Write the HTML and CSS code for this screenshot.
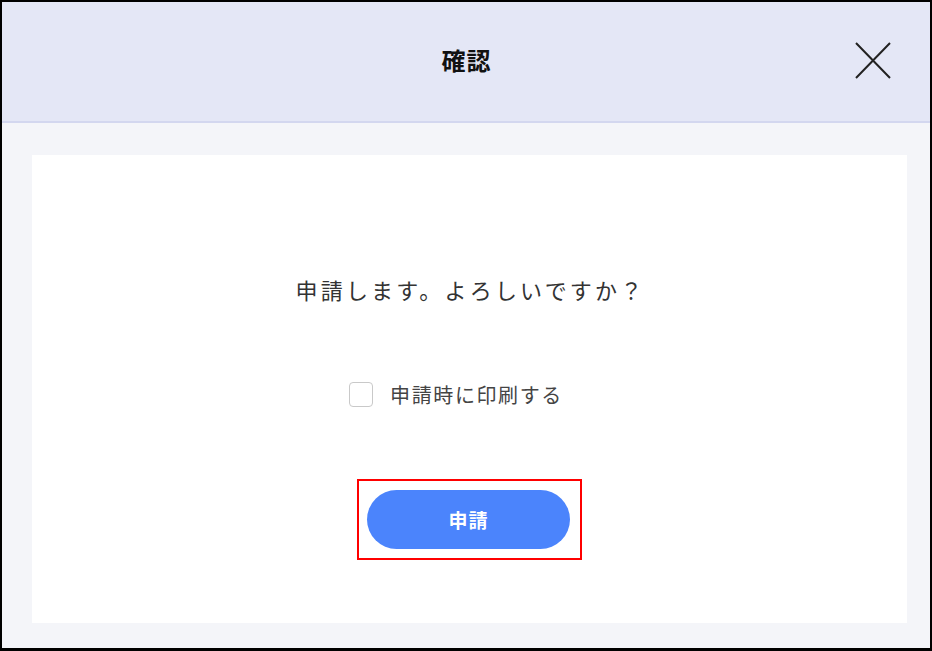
FILE: index.html
```html
<!DOCTYPE html>
<html lang="ja">
<head>
<meta charset="utf-8">
<title>確認</title>
<link rel="stylesheet" href="styles.css">
</head>
<body>
<div class="frame">
  <header class="dialog-header">
    <span class="spacer"></span>
    <h1 class="title">確認</h1>
    <button class="close" aria-label="閉じる">
      <svg width="36" height="37" viewBox="0 0 36 37">
        <path d="M1 1 L35 36 M35 1 L1 36" stroke="#222" stroke-width="2" fill="none"/>
      </svg>
    </button>
  </header>
  <main class="dialog-body">
    <section class="card">
      <p class="message">申請します。よろしいですか？</p>
      <label class="check-row">
        <span class="checkbox"></span>
        <span class="check-label">申請時に印刷する</span>
      </label>
      <div class="highlight">
        <button class="submit">申請</button>
      </div>
    </section>
  </main>
</div>
</body>
</html>
```

FILE: styles.css
```css
* { box-sizing: border-box; }
html, body {
  margin: 0;
  padding: 0;
  width: 932px;
  height: 651px;
  overflow: hidden;
  background: #000;
  font-family: "Noto Sans CJK JP", "Noto Sans", sans-serif;
}
.frame {
  width: 932px;
  height: 651px;
  border-style: solid;
  border-color: #000;
  border-width: 2px 2px 3px 2px;
  display: flex;
  flex-direction: column;
  background: #f4f5f9;
}
.dialog-header {
  height: 121px;
  flex: none;
  background: #e4e7f6;
  border-bottom: 2px solid #d3d7ef;
  display: grid;
  grid-template-columns: 1fr auto 1fr;
  align-items: center;
  padding: 0 39px;
}
.title {
  margin: 0 0 4px;
  font-size: 24px;
  font-weight: 700;
  color: #111;
  letter-spacing: 1px;
  line-height: 1;
  padding-left: 1px;
}
.close {
  justify-self: end;
  background: none;
  border: 0;
  padding: 0;
  margin-bottom: 2px;
  width: 36px;
  height: 37px;
  display: block;
  cursor: pointer;
}
.close svg { display: block; }
.dialog-body {
  flex: 1;
  padding: 32px 23px 25px 30px;
  display: flex;
}
.card {
  flex: 1;
  background: #fff;
  display: flex;
  flex-direction: column;
  align-items: center;
  padding-top: 118px;
}
.message {
  margin: 0;
  font-size: 22px;
  line-height: 33px;
  letter-spacing: 3.2px;
  color: #333;
  padding-left: 2px;
}
.check-row {
  margin-top: 72px;
  display: flex;
  align-items: center;
  height: 33px;
  padding-right: 27px;
}
.checkbox {
  width: 24px;
  height: 25px;
  border: 1.5px solid #c9c9c9;
  border-radius: 4px;
  background: #fff;
  margin-right: 17px;
}
.check-label {
  font-size: 20px;
  line-height: 33px;
  letter-spacing: 1.6px;
  color: #444;
}
.highlight {
  margin-top: 68px;
  border: 2px solid #f00;
  padding: 9px 10px 9px 8px;
}
.submit {
  display: block;
  width: 203px;
  height: 59px;
  border: 0;
  border-radius: 30px;
  background: #4b84fc;
  color: #fff;
  font-family: inherit;
  font-size: 19px;
  font-weight: 700;
  letter-spacing: 1px;
  cursor: pointer;
}
```
